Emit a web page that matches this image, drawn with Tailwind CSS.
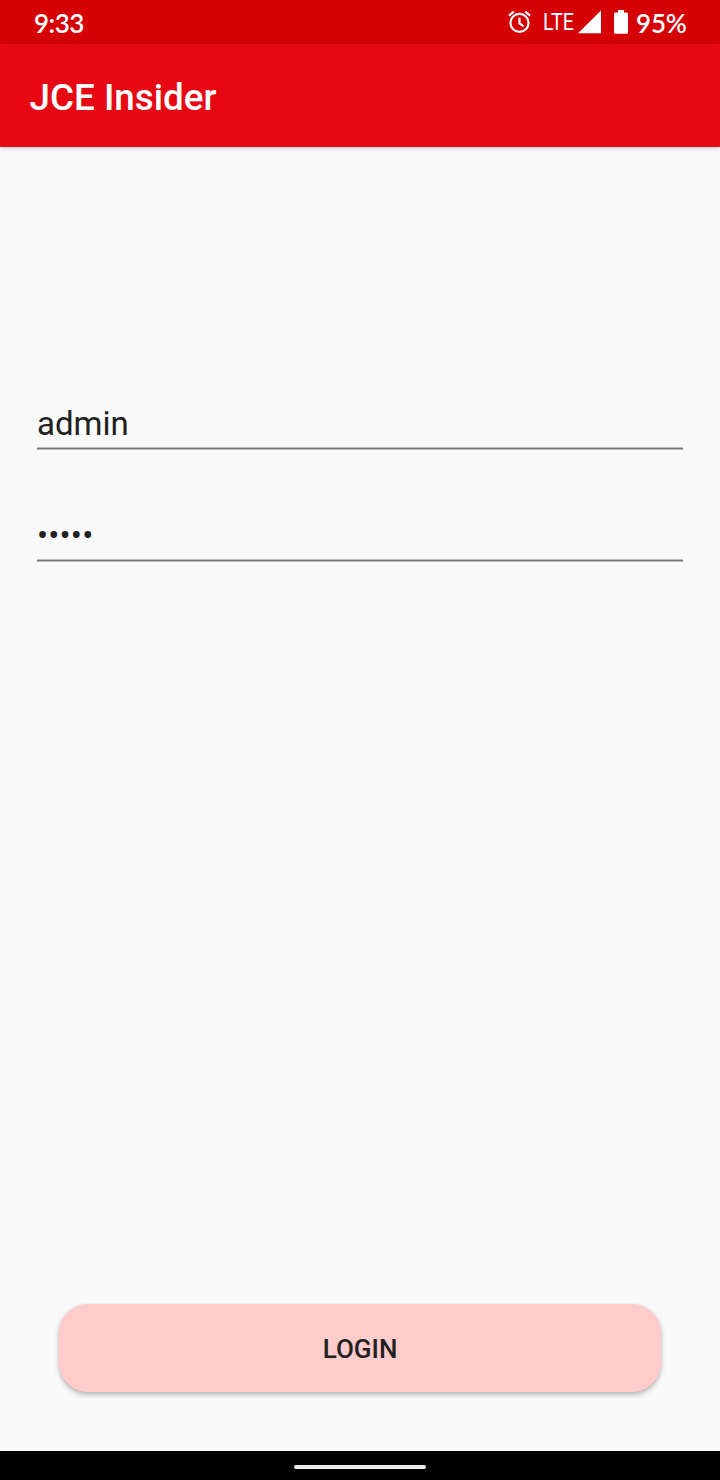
<!DOCTYPE html>
<html lang="en">
<head>
<meta charset="utf-8">
<title>JCE Insider</title>
<script src="https://cdn.jsdelivr.net/npm/@tailwindcss/browser@4"></script>
</head>
<body class="flex h-[1480px] w-[720px] flex-col overflow-hidden bg-[#fafafa] font-[Roboto,sans-serif] text-[#212121]">
  <div class="flex h-[44px] shrink-0 items-start bg-[#d50004] pl-[34px] text-white">
    <span class="mt-[7px] w-[474px] font-[Lato,sans-serif] text-[26px] leading-[32px] font-semibold tracking-[-0.5px]">9:33</span>
    <svg class="mt-[10px] mr-[12px] h-6 w-[23px] shrink-0" viewBox="0 0 24 24" fill="none" stroke="#fff" stroke-width="2.3">
      <circle cx="12" cy="13" r="9.4"/>
      <path d="M12 7.6v5.8l4.2 3.2M1 5.4l5-4.2M23 5.4l-5-4.2"/>
    </svg>
    <span class="mt-[6px] w-[35px] shrink-0 origin-left scale-x-[0.84] text-[23.5px] leading-[32px] font-normal">LTE</span>
    <svg class="mt-[10px] mr-[13px] h-6 w-[23px] shrink-0" viewBox="0 0 23 24" fill="#fff"><path d="M0 23.2 23 .6v22.6z"/></svg>
    <svg class="mt-[10px] mr-[8px] h-6 w-[14px] shrink-0" viewBox="0 0 14 24" fill="#fff"><path d="M4 0h6v2.6h2.6Q14 2.6 14 4v18.4q0 1.4-1.4 1.4H1.4Q0 23.8 0 22.4V4q0-1.4 1.4-1.4H4z"/></svg>
    <span class="mt-[7px] font-[Lato,sans-serif] text-[26px] leading-[32px] font-semibold tracking-[-0.2px]">95%</span>
  </div>
  <header class="flex h-[103px] shrink-0 items-center bg-[#e60914] pt-1 pl-[29.5px] shadow-[0_1px_5px_rgba(0,0,0,0.22)]">
    <h1 class="text-[36.8px] leading-[44px] font-medium text-white">JCE Insider</h1>
  </header>
  <main class="flex grow flex-col px-[37px]">
    <div class="mt-[254px] flex h-[49px] flex-col justify-between">
      <span class="pt-px text-[33px] leading-[44px]">admin</span>
      <svg class="h-[3px] w-[646px]" viewBox="0 0 646 3"><path d="M0 0h646v3H0z" fill="#c0c0c0"/><path d="M0 1h646v1H0z" fill="#757575"/></svg>
    </div>
    <div class="mt-[63px] flex h-[49px] flex-col justify-between">
      <span class="pt-px text-[33px] leading-[44px] tracking-[0.15px]">•••••</span>
      <svg class="h-[3px] w-[646px]" viewBox="0 0 646 3"><path d="M0 0h646v3H0z" fill="#c0c0c0"/><path d="M0 1h646v1H0z" fill="#757575"/></svg>
    </div>
    <button class="mr-[21.7px] ml-[21.5px] mt-auto mb-[59px] flex h-[88px] items-center justify-center rounded-[29px] bg-[#ffcccb] pt-[3px] pl-[0.3px] text-[26px] font-medium shadow-[0_3px_5px_rgba(0,0,0,0.25),0_0_3px_rgba(0,0,0,0.08)]">LOGIN</button>
  </main>
  <nav class="flex h-[29px] shrink-0 justify-center bg-black pt-[13.5px]"><div class="h-[4px] w-[132px] rounded-full bg-[#ebebeb]"></div></nav>
</body>
</html>
